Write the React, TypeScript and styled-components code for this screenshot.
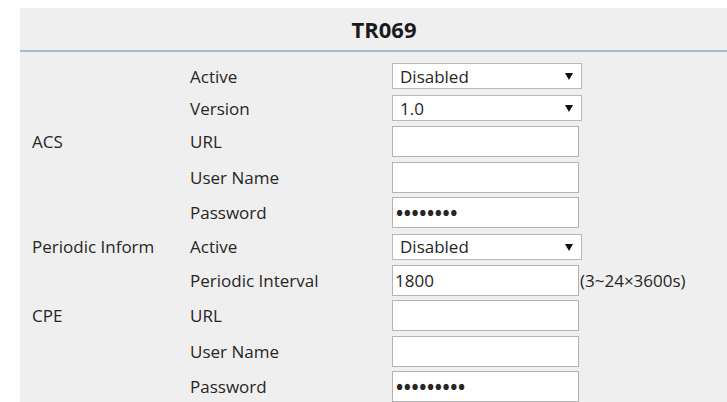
import * as React from "react";
import styled, { createGlobalStyle } from "styled-components";

type FieldKind = "select" | "text" | "password";

interface IField {
  group?: string;
  label: string;
  kind: FieldKind;
  value?: string;
  hint?: string;
}

const fields: IField[] = [
  { label: "Active", kind: "select", value: "Disabled" },
  { label: "Version", kind: "select", value: "1.0" },
  { group: "ACS", label: "URL", kind: "text" },
  { label: "User Name", kind: "text" },
  { label: "Password", kind: "password", value: "12345678" },
  { group: "Periodic Inform", label: "Active", kind: "select", value: "Disabled" },
  {
    label: "Periodic Interval",
    kind: "text",
    value: "1800",
    hint: "(3~24\u00d73600s)",
  },
  { group: "CPE", label: "URL", kind: "text" },
  { label: "User Name", kind: "text" },
  { label: "Password", kind: "password", value: "123456789" },
];

function App() {
  return (
    <>
      <GlobalStyle />
      <Panel>
        <PanelHeader>TR069</PanelHeader>
        <FormBody>
          {fields.map((field, index) => (
            <FieldRow key={index} $tall={field.kind !== "select"}>
              <GroupLabel>{field.group}</GroupLabel>
              <FieldLabel>{field.label}</FieldLabel>
              <ControlCell>
                {field.kind === "select" ? (
                  <SelectWrap>
                    <SelectBox defaultValue={field.value}>
                      <option>{field.value}</option>
                    </SelectBox>
                    <SelectArrow width="8" height="7" viewBox="0 0 8 7">
                      <path d="M0 0h8L4 7z" fill="#111" />
                    </SelectArrow>
                  </SelectWrap>
                ) : (
                  <TextBox
                    type={field.kind}
                    defaultValue={field.value}
                    $secret={field.kind === "password"}
                  />
                )}
                {field.hint && <Hint>{field.hint}</Hint>}
              </ControlCell>
            </FieldRow>
          ))}
        </FormBody>
      </Panel>
    </>
  );
}

const textColor = "#262626";
const panelColor = "#efefef";

const GlobalStyle = createGlobalStyle`
  html, body {
    margin: 0;
    padding: 0;
    background: #ffffff;
    overflow: hidden;
  }
  body {
    font-family: "Open Sans", "Noto Sans", sans-serif;
    color: ${textColor};
  }
`;

const Panel = styled.div`
  margin: 8px 0 0 20px;
  width: 728px;
  background-color: ${panelColor};
`;

const PanelHeader = styled.div`
  display: flex;
  justify-content: center;
  align-items: center;
  height: 42px;
  border-bottom: 2px solid #a9b8d4;
  font-size: 22px;
  font-weight: 700;
  color: #1a1a1a;
`;

const FormBody = styled.div`
  display: flex;
  flex-direction: column;
  padding: 8px 0 0 12px;
`;

const FieldRow = styled.div<{ $tall: boolean }>`
  display: grid;
  grid-template-columns: 158px 202px 1fr;
  align-items: center;
  height: ${(p) => (p.$tall ? 35.5 : 32)}px;
  font-size: 17px;
`;

const GroupLabel = styled.span`
  white-space: nowrap;
`;

const FieldLabel = styled.span`
  white-space: nowrap;
`;

const ControlCell = styled.div`
  display: flex;
  align-items: center;
`;

const SelectWrap = styled.div`
  position: relative;
  display: flex;
`;

const SelectBox = styled.select`
  appearance: none;
  width: 190px;
  height: 26px;
  margin: 0;
  padding: 0 0 0 7px;
  border: 1px solid #b9b9b9;
  border-radius: 0;
  background: #ffffff;
  font-family: inherit;
  font-size: 17px;
  color: ${textColor};
  outline: none;
`;

const SelectArrow = styled.svg`
  position: absolute;
  right: 9px;
  top: 10px;
  pointer-events: none;
`;

const TextBox = styled.input<{ $secret: boolean }>`
  box-sizing: border-box;
  width: 187px;
  height: 31px;
  margin: 0;
  padding: 0 0 0 ${(p) => (p.$secret ? 3 : 2)}px;
  border: 1px solid #b3b3b3;
  border-radius: 0;
  background: #ffffff;
  font-family: inherit;
  font-size: ${(p) => (p.$secret ? 19 : 17)}px;
  font-weight: ${(p) => (p.$secret ? 700 : 400)};
  letter-spacing: ${(p) => (p.$secret ? "0.6px" : "normal")};
  color: ${textColor};
  outline: none;
`;

const Hint = styled.span`
  margin-left: 1px;
  white-space: nowrap;
`;

export default App;
